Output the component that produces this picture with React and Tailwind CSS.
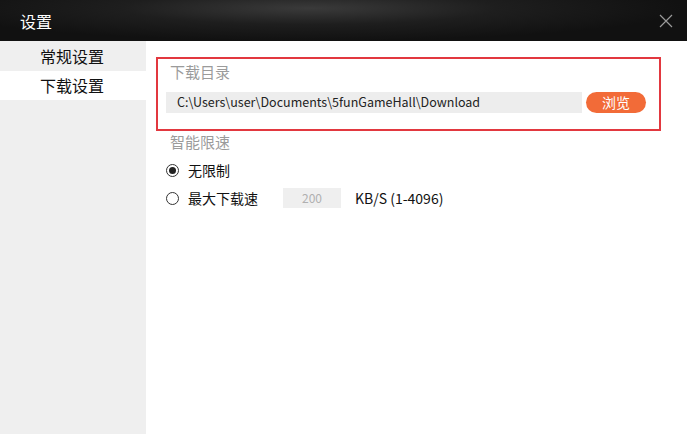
import { useState } from "react";

const font = { fontFamily: '"Microsoft YaHei", "Noto Sans CJK SC", sans-serif' };

function Radio({ checked }) {
  return (
    <span className="flex h-[13px] w-[13px] items-center justify-center rounded-full border border-[#333]">
      {checked && <span className="h-[7px] w-[7px] rounded-full bg-[#222]" />}
    </span>
  );
}

export default function App() {
  const [tab, setTab] = useState(1);
  const [limit, setLimit] = useState(0);
  const tabs = ["常规设置", "下载设置"];

  return (
    <div className="flex h-[434px] w-[687px] flex-col bg-white" style={font}>
      {/* Title bar */}
      <div className="flex h-[41px] items-center justify-between bg-[#161616] bg-[radial-gradient(ellipse_at_45%_20%,#3a3a3a_0%,#1e1e1e_35%,#111_70%)] pl-[20px] pr-[14px]">
        <span className="text-[16px] text-white">设置</span>
        <svg width="14" height="14" viewBox="0 0 14 14" className="mt-[1px]">
          <path d="M1 1L13 13M13 1L1 13" stroke="#9a9a9a" strokeWidth="1.2" />
        </svg>
      </div>

      <div className="flex flex-1">
        {/* Sidebar */}
        <div className="w-[146px] bg-[#efefef]">
          {tabs.map((t, i) => (
            <div
              key={t}
              onClick={() => setTab(i)}
              className={`flex h-[29.5px] cursor-pointer items-center justify-center pr-[2px] text-[16px] text-[#111] ${
                tab === i ? "bg-white" : ""
              }`}
            >
              {t}
            </div>
          ))}
        </div>

        {/* Content */}
        <div className="flex-1 pl-[10px] pt-[16px]">
          <div className="h-[74px] w-[505px] border-2 border-[#e2383f] pl-[8px] pt-[3px]">
            <div className="pl-[4px] text-[15px] leading-[20px] text-[#9b9b9b]">下载目录</div>
            <div className="mt-[10px] flex items-center gap-[4px]">
              <div className="flex h-[21px] w-[416px] items-center bg-[#ededed] pl-[11px] text-[12.5px] text-[#222]">
                C:\Users\user\Documents\5funGameHall\Download
              </div>
              <button className="h-[21px] w-[60px] rounded-full bg-[#f26b38] text-[14px] leading-[21px] text-white">
                浏览
              </button>
            </div>
          </div>

          <div className="mt-[1px] pl-[14px] text-[15px] leading-[20px] text-[#9b9b9b]">智能限速</div>

          <div className="mt-[8px] flex flex-col gap-[8px] pl-[10px]">
            <div className="flex h-[20px] cursor-pointer items-center" onClick={() => setLimit(0)}>
              <Radio checked={limit === 0} />
              <span className="ml-[9px] text-[14px] text-[#111]">无限制</span>
            </div>
            <div className="flex h-[20px] cursor-pointer items-center" onClick={() => setLimit(1)}>
              <Radio checked={limit === 1} />
              <span className="ml-[9px] w-[95px] text-[14px] text-[#111]">最大下载速</span>
              <div className="flex h-[20px] w-[58px] items-center justify-center bg-[#efefef] text-[12px] text-[#b0b0b0]">
                200
              </div>
              <span className="ml-[14px] text-[14px] text-[#111]">KB/S (1-4096)</span>
            </div>
          </div>
        </div>
      </div>
    </div>
  );
}
